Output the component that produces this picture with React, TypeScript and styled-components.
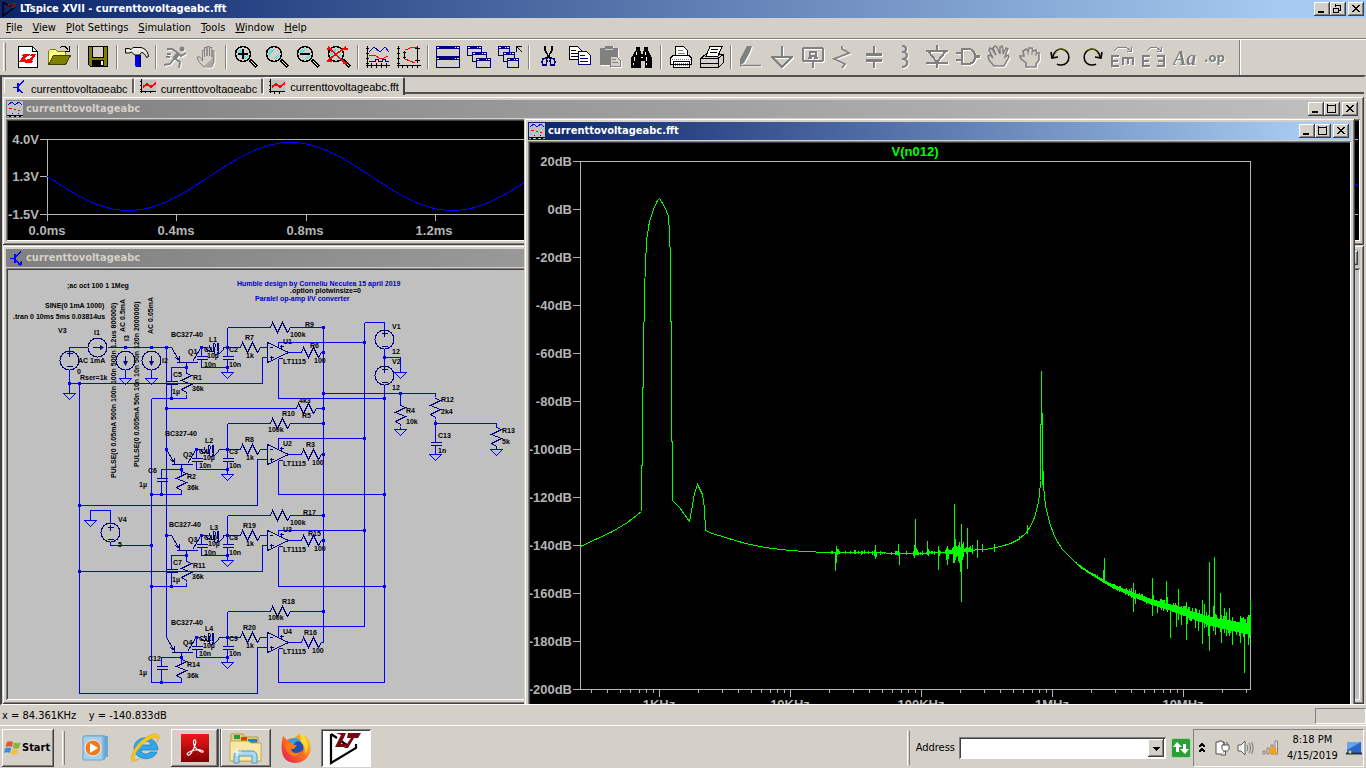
import React from "react";
import styled, { createGlobalStyle, css } from "styled-components";

const ui = `"DejaVu Sans Condensed", "DejaVu Sans", sans-serif`;
const arial = `"Liberation Sans", Arial, sans-serif`;
const face = "#d4d0c8";

const Global = createGlobalStyle`
  * { box-sizing: border-box; }
  html, body { margin: 0; padding: 0; background: ${face}; }
  body { font: 11px/14px ${ui}; color: #000; overflow: hidden; }
  button, select { font: inherit; color: inherit; margin: 0; padding: 0; border: 0; background: none; }
  svg { display: block; flex: none; }
`;

const raised = css`
  box-shadow: inset -1px -1px #404040, inset 1px 1px #fff, inset -2px -2px #808080;
`;
const sunken = css`
  box-shadow: inset 1px 1px #808080, inset -1px -1px #fff, inset 2px 2px #404040;
`;

const Screen = styled.div`
  display: flex;
  flex-direction: column;
  height: 100vh;
  min-height: 480px;
  background: ${face};
`;
const TitleBar = styled.header<{ $kind?: "app" | "active" | "inactive" }>`
  display: flex;
  align-items: center;
  flex: none;
  height: 18px;
  padding: 0 2px 0 1px;
  gap: ${(p) => (p.$kind === "app" ? 2 : 3)}px;
  color: ${(p) => (p.$kind === "inactive" ? face : "#fff")};
  background: ${(p) =>
    p.$kind === "inactive"
      ? "linear-gradient(90deg, #808080, #c0c0c0)"
      : "linear-gradient(90deg, #0a246a, #a6caf0 94%)"};
`;
const TitleText = styled.h1`
  flex: 1;
  margin: 0;
  font: bold 11px/16px ${ui};
  white-space: nowrap;
`;
const Buttons = styled.div`
  display: flex;
`;
const CaptionButton = styled.button`
  width: 16px;
  height: 14px;
  background: ${face};
  ${raised}
  &:last-child { margin-left: 2px; }
`;
const MenuBar = styled.nav`
  display: flex;
  align-items: center;
  flex: none;
  height: 20px;
  padding-left: 6px;
  gap: 10px;
`;
const MenuItem = styled.button`
  line-height: 16px;
  u { text-underline-offset: 1px; }
`;
const ToolBar = styled.div`
  display: flex;
  align-items: center;
  flex: none;
  height: 37px;
  border-top: 1px solid #808080;
  box-shadow: inset 0 1px #fff;
`;
const Grip = styled.span<{ $h: number }>`
  width: 3px;
  height: ${(p) => p.$h}px;
  flex: none;
  margin: 0 6px 0 3px;
  border-left: 1px solid #fff;
  border-right: 1px solid #808080;
`;
const ToolButton = styled.button`
  display: flex;
  justify-content: center;
  align-items: center;
  flex: none;
  width: 31px;
  height: 30px;
  &:disabled svg { filter: drop-shadow(1px 1px 0 #fff); }
`;
const Separator = styled.span<{ $tall?: boolean }>`
  flex: none;
  width: 2px;
  height: ${(p) => (p.$tall ? 35 : 24)}px;
  margin: 0 3px;
  margin-left: ${(p) => (p.$tall ? 8 : 3)}px;
  border-left: 1px solid #808080;
  border-right: 1px solid #fff;
`;
const Frame = styled.main`
  display: flex;
  flex-direction: column;
  flex: 1;
  min-height: 0;
  border: 2px solid #404040;
  border-top-color: #505050;
  border-right-color: ${face};
  border-bottom: 1px solid #fff;
`;
const Tabs = styled.div`
  display: flex;
  align-items: flex-end;
  flex: none;
  height: 19px;
  padding: 0 0 1px 2px;
`;
const Tab = styled.button<{ $active?: boolean }>`
  display: flex;
  align-items: ${(p) => (p.$active ? "center" : "flex-start")};
  gap: 5px;
  height: ${(p) => (p.$active ? 18 : 15)}px;
  padding: 0 4px 0 5px;
  margin-bottom: ${(p) => (p.$active ? 0 : 2)}px;
  overflow: hidden;
  font: 11px/20px ${arial};
  border-left: 1px solid #fff;
  border-top: 1px solid #fff;
  border-right: 2px solid ${(p) => (p.$active ? "#404040" : "#606060")};
  border-radius: 2px 2px 0 0;
`;
const TabRest = styled.span`
  flex: 1;
  height: 3px;
  border-top: 2px solid #505050;
`;
const Desktop = styled.div`
  position: relative;
  flex: 1;
  min-height: 0;
  overflow: hidden;
`;
const Win = styled.section`
  position: absolute;
  display: flex;
  flex-direction: column;
  padding: 4px;
  background: ${face};
  box-shadow: inset 1px 1px ${face}, inset -1px -1px #404040, inset 2px 2px #fff, inset -2px -2px #808080;
`;
const WaveWin = styled(Win)`
  top: 0;
  left: 0;
  right: 0;
  height: 149px;
`;
const SchematicWin = styled(Win)`
  top: 149px;
  left: 0;
  right: 0;
  bottom: 0;
`;
const FftWin = styled(Win)`
  top: 22px;
  left: 522px;
  right: 9px;
  height: 640px;
`;
const Client = styled.div<{ $bg: string }>`
  flex: 1;
  min-height: 0;
  margin-top: 1px;
  padding: 2px;
  overflow: hidden;
  background: ${(p) => p.$bg};
  ${sunken}
`;
const StatusBar = styled.footer`
  display: flex;
  align-items: center;
  justify-content: space-between;
  flex: none;
  height: 20px;
  padding: 2px 0 0 2px;
  white-space: pre;
`;
const StatusCell = styled.span`
  width: 51px;
  height: 16px;
  border: 1px solid #808080;
  border-right-color: #fff;
  border-bottom-color: #fff;
`;
const TaskBar = styled.footer`
  display: flex;
  align-items: center;
  flex: none;
  height: 43px;
  padding: 1px 2px 0;
  border-top: 1px solid #fff;
`;
const StartButton = styled.button`
  display: flex;
  align-items: center;
  gap: 1px;
  width: 52px;
  height: 38px;
  margin-right: 5px;
  padding-left: 2px;
  font: bold 11px/16px ${ui};
  ${raised}
`;
const Task = styled.button<{ $look?: "raised" | "stack" | "pressed" }>`
  display: flex;
  align-items: center;
  justify-content: center;
  flex: none;
  width: 50px;
  height: 38px;
  ${(p) => (p.$look === "raised" || p.$look === "stack") && raised}
  ${(p) => p.$look === "stack" && css`border-right: 3px double #606060;`}
  ${(p) => p.$look === "pressed" && css`${sunken} background: #fff;`}
`;
const Push = styled.span`
  flex: 1;
`;
const AddressLabel = styled.label`
  margin-right: 4px;
`;
const Combo = styled.div`
  position: relative;
  flex: none;
  width: 207px;
  height: 22px;
  background: #fff;
  ${sunken}
  select { width: 100%; height: 100%; appearance: none; outline: 0; }
`;
const ComboArrow = styled.span`
  position: absolute;
  top: 2px;
  right: 2px;
  width: 16px;
  height: 18px;
  background: ${face};
  pointer-events: none;
  ${raised}
`;
const GoButton = styled.button`
  margin: 0 2px 0 5px;
`;
const Tray = styled.div`
  display: flex;
  align-items: center;
  justify-content: space-between;
  flex: none;
  width: 171px;
  height: 38px;
  padding: 0 1px 0 4px;
  border: 1px solid #808080;
  border-right-color: #fff;
  border-bottom-color: #fff;
`;
const Clock = styled.time`
  width: 52px;
  text-align: center;
  line-height: 16px;
`;

/* ---------- small icon helpers ---------- */

type IconProps = { children: React.ReactNode; w?: number; h?: number; soft?: boolean };
const Icon = ({ children, w = 24, h = 24, soft }: IconProps) => (
  <svg width={w} height={h} viewBox={`0 0 ${w} ${h}`} fill="none" aria-hidden="true" shapeRendering={soft ? "auto" : "crispEdges"}>
    {children}
  </svg>
);
const G = "#808080";
const N = "#000080";

const Lens = ({ mark }: { mark?: React.ReactNode }) => (
  <>
    <path d="M16 15l7 7" stroke="#000" strokeWidth="4" />
    <path d="M17 16l5 5" stroke="#fff" strokeWidth="1" />
    <circle cx="9" cy="9" r="7.5" fill={face} stroke="#000" strokeWidth="1.6" />
    <path d="M4 7l3-3M4 10l5-6M9 14l5-5M11 14l3-3" stroke="#20e8f8" strokeWidth="1.4" />
    {mark}
  </>
);
const MiniWin = ({ x, y, w = 15, h = 10 }: { x: number; y: number; w?: number; h?: number }) => (
  <g>
    <rect x={x + 0.5} y={y + 0.5} width={w - 1} height={h - 1} fill={face} stroke={N} />
    <rect x={x} y={y} width={w} height={3} fill={N} />
    <path d={`M${x + 1} ${y + 1.5}h2M${x + w - 5} ${y + 1.5}h1M${x + w - 3} ${y + 1.5}h2`} stroke="#fff" />
  </g>
);

type Tool = { name: string; off?: boolean; soft?: boolean; art: React.ReactNode } | "sep";
const tools: Tool[] = [
  { name: "New schematic", art: <>
    <path d="M2.5 1.5h14l5 5v16h-19z" fill="#fff" stroke="#000" /><path d="M16.5 1.5v5h5" stroke="#000" />
    <path fillRule="evenodd" d="M3 17l4-6h-1l1-2h13l-4 7h2l-3 2H10l-2-1zM9 14h5l2-3h-5z" fill="#f00" /><path d="M10 15l5-6" stroke="#fff" />
  </> },
  { name: "Open", art: <>
    <path d="M1.500 18V6.500l2-2h5l2 2h8v4" fill="#ffff80" stroke="#808000" />
    <path d="M1.500 19.500l5-9h17l-5 9z" fill="#808000" stroke="#404000" /><path d="M13 3c3-3 6-2 8 2M22.500 1v5h-5" stroke="#000" />
  </> },
  "sep",
  { name: "Save", art: <>
    <path d="M2 1h20v21H4l-2-2z" fill="#000" /><path d="M3 2h3v11h12V2h3v19H4l-1-1z" fill="#808000" />
    <path d="M7 2h10v10H7z" fill={face} /><path d="M6 15h12v6H6z" fill="#000" /><path d="M15 16h2v4h-2z" fill="#fff" />
  </> },
  "sep",
  { name: "Control panel", soft: true, art: <>
    <path d="M10 10h5v12h-4c-1-1-1-2-1-3z" fill="#0000f0" /><path d="M14 10h2v12h-2z" fill="#000070" />
    <path d="M.5 3.500h3.500l2 1 2-2h8c4 1 7 4 7.500 9l-2 1c-1-3-3-5-5-5l-2 2.500h-5l-3-3-2 1H.5z" fill="#e8e4dc" stroke="#000" /><path d="M2 5.500h3M8 4h7l4 2" stroke="#fff" />
  </> },
  "sep",
  { name: "Run", off: true, soft: true, art: <>
    <circle cx="18" cy="4" r="2.500" fill={G} />
    <path d="M14 9l-4 5" stroke={G} strokeWidth="4" />
    <path d="M3 4h5l6 4 3 3 5-3M10 13l6 4-1 6M10 14l-4 5-6 1M3 9h4M2 12h4" stroke={G} strokeWidth="1.800" />
  </> },
  { name: "Halt", off: true, soft: true, art: <>
    <path d="M7.500 16V5.500h2V12V2.500h2.500V11V1.500h2.500V11V2.500h2.500V12V5.500h2V17l-2 5h-8L4 17l-2-5h3z" fill={face} stroke={G} />
    <path d="M9 21h8l2-4V9l-3 6z" fill={G} opacity=".5" />
  </> },
  "sep",
  { name: "Zoom area", art: <Lens mark={<path d="M4 9h10M9 4v10" stroke="#000" strokeWidth="2" />} /> },
  { name: "Pan", art: <Lens /> },
  { name: "Zoom back", art: <Lens mark={<path d="M4 9h10" stroke="#000" strokeWidth="2" />} /> },
  { name: "Zoom full extents", art: <><Lens /><path d="M1 2l18 17M19 2L1 15M0 4h5M0 16h5M17 4h4M16 18h4" stroke="#f00" strokeWidth="1.800" /></> },
  "sep",
  { name: "Autorange", art: <>
    <path d="M1.500 1v22M0 3.500h3M0 8.500h3M0 13.500h3M0 18.500h3M0 20.500h24M5.500 18v5M10.500 18v5M15.500 18v5M20.500 18v5" stroke="#000" />
    <path d="M3 7l5-5 6 5 5-5 4 5" stroke="#0000c0" /><path d="M3 10h6l4 3h5l4-2" stroke="#f00" /><path d="M3 16.500h6v-2h3v2h4v-2h3v2h4" stroke={N} />
  </> },
  { name: "Pick traces", art: <>
    <path d="M1.500 1v22M0 3.500h3M0 8.500h3M0 13.500h3M0 18.500h3M0 20.500h24M5.500 20v3M10.500 20v3M15.500 20v3M20.500 20v3" stroke="#000" />
    <path d="M8 5l8-3h4M8 14l10 4" stroke="#f00" /><path d="M7.500 6v8M6 7.500h3M6 12.500h3M20.500 1v17M18 3.500h5M18 15.500h5" stroke="#000" />
  </> },
  "sep",
  { name: "Tile windows", art: <><MiniWin x={0} y={1} w={24} h={11} /><MiniWin x={0} y={12} w={24} h={11} /></> },
  { name: "Cascade windows", art: <><MiniWin x={0} y={1} /><MiniWin x={5} y={7} /><MiniWin x={9} y={13} /></> },
  { name: "Close all windows", art: <><MiniWin x={0} y={1} w={12} /><MiniWin x={5} y={7} w={12} /><MiniWin x={9} y={13} w={12} /><path d="M18.500 7V1.500h5M19 2l5 5" stroke="#000" /></> },
  "sep",
  { name: "Cut", art: <>
    <path d="M8 1v4l5 9M15 1v4l-5 9" stroke="#000" strokeWidth="1.600" />
    <path d="M9 13l-3 1-1 3 1 3h3l1-4zM14 13l3 1 1 3-1 3h-3l-1-4z" stroke={N} strokeWidth="1.600" />
  </> },
  { name: "Copy", art: <>
    <path d="M1.500 1.500h8l4 4v9h-12z" fill="#fff" stroke="#000" /><path d="M3 5.500h5M3 8.500h8M3 11.500h8" stroke="#000" />
    <path d="M10.500 6.500h8l4 4v9h-12z" fill="#fff" stroke={N} /><path d="M12 10.500h5M12 13.500h8M12 16.500h8" stroke={N} />
  </> },
  { name: "Paste", off: true, art: <>
    <path d="M1 3h5V1h8v2h5v17H1z" fill={G} /><path d="M6 4.500h8" stroke={face} />
    <path d="M11.500 11.500h6l4 4v6h-10z" fill={face} stroke={G} /><path d="M13 14.500h4M13 17.500h6" stroke={G} />
  </> },
  { name: "Find", art: <>
    <path d="M6 2h4v3l2 5V10l2-5V2h4v3l4 8v10h-7v-7h-4v7H1V13l5-8z" fill="#000" /><path d="M6 7v3M4 12v4M3 18v2M15 7v3M16 12v4M16 18v2M11 12h2" stroke="#fff" />
  </> },
  "sep",
  { name: "Print", art: <>
    <path d="M6.500 10V1.500h8l4 4V10" fill="#fff" stroke="#000" /><path d="M9 5h5M9 8h7" stroke={G} />
    <path d="M1.500 19v-6l3-3h15l3 3v6zM4.500 16h16v6.500h-16z" fill="#fff" stroke="#000" /><path d="M3 14.500h19M6 18.500h13M6 20.500h13" stroke={G} strokeDasharray="1 1" />
  </> },
  { name: "Print setup", art: <>
    <path d="M.5 13.500l5-4h18v8l-5 5H.5z" fill={face} stroke="#000" />
    <path d="M6 11l4-9.500h12L18 11z" fill="#fff" stroke="#000" /><path d="M11 4.500h7M10 7.500h7" stroke="#000" />
    <path d="M1 13.500h17l5-4M18.500 14v8M1 18.500h17" stroke="#000" /><path d="M10 16.500h5" stroke="#ff0" />
  </> },
  "sep",
  { name: "Wire", off: true, soft: true, art: <><path d="M8 1h5l-2 6-6 11-4 2 0-6z" fill={G} /><path d="M1 20.500h21" stroke={G} strokeWidth="1.500" /></> },
  { name: "Ground", off: true, art: <path d="M12 1v11M1 12h22M2 12l10 10 10-10" stroke={G} strokeWidth="1.600" /> },
  { name: "Label net", off: true, art: <>
    <rect x="2" y="3" width="20" height="13" rx="2" stroke={G} strokeWidth="2" /><path d="M12 17v6" stroke={G} strokeWidth="2" />
    <path d="M9 13V7h6v6M9 10.500h6M7 13h4M13 13h4" stroke={G} strokeWidth="2" />
  </> },
  { name: "Resistor", off: true, soft: true, art: <path d="M10 1v3l7 4-15 6 11 5-3 4" stroke={G} strokeWidth="1.800" /> },
  { name: "Capacitor", off: true, art: <path d="M11 1v9M3 9.500h16M3 15.500h16M11 16v7" stroke={G} strokeWidth="2.500" /> },
  { name: "Inductor", off: true, soft: true, art: <path d="M8 1c5 0 6 6 0 6 6 0 7 7 0 7 7 0 7 8 0 8" stroke={G} strokeWidth="2.200" /> },
  { name: "Diode", off: true, art: <path d="M12 0v6M1 6h22M3 6l9 11 9-11M1 18h22M12 17v6" stroke={G} strokeWidth="2" /> },
  { name: "Component", off: true, art: <path d="M6 4h6c5 0 7 4 7 7.500s-2 7.500-7 7.500H6zM0 8h6M0 15h6M19 11.500h5" stroke={G} strokeWidth="2.200" /> },
  { name: "Move", off: true, soft: true, art: <>
    <path d="M7 21l-5-6-1-4 2-1 3 3-4-8 1-2 2 1 4 6-3-7 2-2 2 1 3 7 0-7 2-1 1 2 0 6 3-6 2 1-1 2-2 6 3-2 1 2-5 9z" fill={face} stroke={G} strokeWidth="1.500" />
  </> },
  { name: "Drag", off: true, soft: true, art: <>
    <path d="M8 22v-4l-5-4-1-3 4 0-1-5 3-2 2 2 1-3 3 0 1 3 3-1 1 3 2 0 0 7-3 4v3z" fill={face} stroke={G} strokeWidth="1.600" /><path d="M10 6v4M14 6v4M18 8v3" stroke={G} />
  </> },
  { name: "Undo", soft: true, art: <><path d="M4 12c0-4 4-8 8-8 11 1 10 16 0 16-2 0-3 0-4-1" stroke="#000" strokeWidth="1.500" /><path d="M6 9c1-3 4-5 7-5 2 0 4 1 5 2" stroke="#808000" /><path d="M2 7l1 6 6-1" stroke="#000" strokeWidth="1.600" /></> },
  { name: "Redo", soft: true, art: <><path d="M20 12c0-4-4-8-8-8-11 1-10 16 0 16 2 0 3 0 4-1" stroke="#000" strokeWidth="1.500" /><path d="M18 9c-1-3-4-5-7-5-2 0-4 1-5 2" stroke="#808000" /><path d="M22 7l-1 6-6-1" stroke="#000" strokeWidth="1.600" /></> },
  { name: "Rotate", off: true, art: <>
    <path d="M3 6l4-4h8l5 4M20 2v4h-4" stroke={G} /><path d="M0 11h8M1 11v11M0 16h7M0 21h8M11 13h12M12 13v7M17 13v6M22 13v7" stroke={G} strokeWidth="2" />
  </> },
  { name: "Mirror", off: true, art: <>
    <path d="M5 6l4-4h5l5 4M19 2v4h-4" stroke={G} /><path d="M0 11h8M1 11v11M0 16h7M0 21h8M15 11h8M22 11v11M16 16h7M15 21h8" stroke={G} strokeWidth="2" />
  </> },
  { name: "Text", off: true, soft: true, art: <text x="0" y="20" fill={G} fontFamily="Liberation Serif, serif" fontStyle="italic" fontWeight="bold" fontSize="20">Aa</text> },
  { name: "SPICE directive", off: true, soft: true, art: <text x="0" y="17" fill={G} fontFamily="DejaVu Sans Condensed, sans-serif" fontWeight="bold" fontSize="13">.op</text> },
];

/* ---------- window glyphs ---------- */

const Caption = ({ label, d, w = 1 }: { label: string; d: string; w?: number }) => (
  <CaptionButton aria-label={label}>
    <Icon w={16} h={14}><path d={d} stroke="#000" strokeWidth={w} /></Icon>
  </CaptionButton>
);
const WinButtons = ({ restore }: { restore?: boolean }) => (
  <Buttons>
    <Caption label="Minimize" d="M4 10h6" w={2} />
    {restore
      ? <Caption label="Restore" d="M5 3h6M5.500 2v3M10.500 3v5h-2M3 6h6M3.500 6v4.500h5V6" />
      : <Caption label="Maximize" d="M3 3h9M3.500 2v8.500h8V2" />}
    <Caption label="Close" d="M4 3l7 7M5 3l7 7M11 3l-7 7M12 3l-7 7" />
  </Buttons>
);
const WaveGlyph = () => (
  <Icon w={16} h={16}>
    <path d="M0 0h16v16H0z" fill="#c0c0c0" />
    <path d="M1 4l4-3 3 3 4-3 3 3" stroke="#00f" /><path d="M2 7.500h3M7 8.500h2M11 9.500h2" stroke="#f00" />
    <path d="M5 12.500h1M11 12.500h1" stroke="#00f" /><path d="M0 14.500h16" stroke="#000" /><path d="M2 15.500h2M7 15.500h2M12 15.500h2" stroke="#000" />
  </Icon>
);
const BjtGlyph = ({ tab }: { tab?: boolean }) => (
  <Icon w={16} h={16}>
    <path d="M3 8.500h4M9 6.500l5-5M9 10.500l5 5" stroke="#00f" />
    <path d="M8 4v9" stroke="#00f" strokeWidth="2" />
    {!tab && <path d="M10 15h5v-4z" fill="#00f" />}
  </Icon>
);
const PlotGlyph = () => (
  <Icon w={16} h={16}><path d="M2 1h14v11H2z" fill="#c0c0c0" /><path d="M1.500 0v14M0 2.500h2M0 6.500h2M0 10.500h2M0 12.500h16M5.500 12v3M10.500 12v3" stroke="#000" /><path d="M3 8l4-3 4 3 5-4" stroke="#f00" strokeWidth="2" /></Icon>
);

/* ---------- transient plot ---------- */

const sine = Array.from({ length: 1312 }, (_, i) => {
  const y = 176.5 + 34 * Math.sin((2 * Math.PI * i) / 324);
  return `${i ? "L" : "M"}${47.5 + i} ${y.toFixed(1)}`;
}).join("");

const TransientPlot = () => (
  <svg width="1400" height="119" viewBox="8 121 1400 119" fill="none" role="img" aria-label="Transient waveform">
    <g stroke="#b4b4b4" shapeRendering="crispEdges">
      <path d="M40 139.500H1358M40 214.500H1358M40 176.500h8M47.500 139v82" />
      {[176, 306, 435, 565, 695].map((x) => <path key={x} d={`M${x + 0.5} 214v7`} />)}
    </g>
    <path d={sine} stroke="#00f" strokeWidth="1" shapeRendering="crispEdges" />
    <g fill="#b4b4b4" fontFamily={arial} fontWeight="bold" fontSize="13">
      {[["4.0V", 144], ["1.3V", 181], ["-1.5V", 219]].map(([t, y]) => <text key={t} x="39" y={y} textAnchor="end">{t}</text>)}
      {["0.0ms", "0.4ms", "0.8ms", "1.2ms"].map((t, i) => <text key={t} x={47 + i * 129} y="235" textAnchor="middle">{t}</text>)}
    </g>
  </svg>
);

/* ---------- FFT plot ---------- */

const curve: [number, number][] = [
  [580, 546], [595, 539], [612, 531], [627, 522], [641, 511], [642, 420], [644, 290], [646, 240], [649, 221], [653, 209],
  [657, 200], [659, 198], [664, 206], [668, 216], [669, 232], [670, 260], [671, 380], [672, 500], [679, 507], [689, 521], [691, 510], [694, 493],
  [697, 484], [702, 494], [704, 508], [705, 530], [712, 533], [725, 537], [745, 543], [765, 547], [780, 549], [790, 550], [805, 551],
  [825, 552], [860, 552], [910, 553], [945, 552], [965, 550], [985, 549], [1000, 546], [1010, 543], [1018, 539],
  [1025, 533], [1030, 526], [1034, 517], [1037, 506], [1039, 495], [1040, 480], [1041, 371], [1042, 454], [1043, 486],
  [1045, 505], [1047, 514], [1050, 525], [1055, 538], [1062, 549], [1070, 557], [1077, 564], [1087, 571], [1097, 577],
  [1107, 583], [1120, 589], [1135, 595], [1150, 601], [1170, 607], [1190, 614], [1210, 621], [1230, 625], [1250, 629],
];
const spikes: [number, number, number][] = [
  [835, 553, 571], [836, 546, 563], [837, 549, 555], [838, 549, 554], [875, 545, 559], [876, 552, 557], [874, 550, 556], [898, 544, 556], [899, 552, 565], [897, 551, 555],
  [915, 519, 555], [914, 545, 558], [913, 551, 556], [916, 548, 555], [917, 550, 555], [927, 541, 553], [928, 549, 556], [938, 546, 570], [939, 550, 556], [946, 548, 560], [947, 546, 565],
  [948, 550, 559], [953, 547, 563], [954, 504, 563], [955, 539, 560], [956, 546, 557], [958, 545, 561], [959, 547, 563], [960, 547, 572],
  [961, 524, 602], [962, 544, 560], [963, 546, 557], [967, 528, 569], [966, 547, 554], [972, 545, 554], [977, 540, 558], [982, 544, 552], [994, 544, 552],
  [1027, 525, 534], [1019, 536, 540], [1042, 454, 485], [1103, 570, 581], [1104, 558, 582], [1131, 588, 598], [1133, 583, 612], [1135, 590, 604], [1137, 594, 598],
  [1152, 578, 616], [1153, 595, 605], [1157, 602, 613], [1163, 600, 611], [1166, 581, 606], [1167, 597, 612], [1170, 606, 638], [1176, 605, 627], [1178, 589, 620], [1181, 606, 625], [1186, 602, 640],
  [1187, 609, 624], [1195, 608, 628], [1198, 615, 631], [1202, 600, 644], [1204, 604, 628], [1208, 615, 636], [1209, 562, 651], [1213, 606, 631], [1214, 557, 625], [1215, 616, 635], [1220, 593, 632],
  [1221, 617, 643], [1224, 608, 633], [1226, 612, 636], [1229, 608, 636], [1230, 620, 633], [1232, 621, 645], [1240, 616, 643], [1243, 617, 632],
  [1244, 619, 673], [1247, 617, 634], [1248, 615, 645], [1249, 615, 632], [1250, 600, 632],
];
const floorAt = (x: number) => {
  const i = Math.max(1, curve.findIndex(([cx]) => cx >= x));
  const [x0, y0] = curve[i - 1];
  const [x1, y1] = curve[i];
  return y0 + ((y1 - y0) * (x - x0)) / (x1 - x0);
};
const hash = (n: number) => {
  const s = Math.sin(n * 91.7) * 4375.85;
  return s - Math.floor(s);
};
const noise: string[] = [];
for (let x = 830; x <= 1250; x++) {
  const base = floorAt(x);
  let amp = 0;
  if (x < 948) amp = hash(x + 7) > 0.75 ? 1 : 0;
  else if (x < 957 || (x > 963 && x < 972)) amp = 1 + hash(x);
  else if (x < 972) amp = 3 + hash(x) * 2;
  else if (x > 1065) amp = ((x - 1065) / 185) * 5.5;
  if (!amp) continue;
  const up = amp * (0.8 + (hash(x * 3) > 0.75 ? 0.9 : 0.1));
  const down = amp * (0.8 + (hash(x * 5) > 0.8 ? 0.7 : 0.1));
  noise.push(`M${x + 0.5} ${Math.round(base - up)}V${Math.round(base + down + 1)}`);
}
const minor: number[] = [];
[528, 659, 790, 921, 1052, 1183].forEach((d) => {
  for (let k = 2; k < 10; k++) {
    const x = Math.round(d + 131 * Math.log10(k));
    if (x > 581 && x < 1250) minor.push(x);
  }
});

const FftPlot = () => (
  <svg width="1300" height="600" viewBox="530 143 1300 600" fill="none" role="img" aria-label="FFT of V(n012)">
    <g stroke="#b4b4b4" shapeRendering="crispEdges">
      <path d="M573 161.500H1251M573 689.500H1251M580.500 161v529M1250.500 161v529" />
      {Array.from({ length: 10 }, (_, i) => <path key={i} d={`M573 ${209.5 + 48 * i}h7`} />)}
      {minor.map((x) => <path key={x} d={`M${x + 0.5} 690v3`} />)}
      {[659, 790, 921, 1052, 1183].map((x) => <path key={x} d={`M${x + 0.5} 690v7`} />)}
    </g>
    <g stroke="#0f0" shapeRendering="crispEdges">
      <path d={"M" + curve.map(([x, y]) => `${x + 0.5} ${y + 0.5}`).join("L")} />
      <path d={noise.join("")} />
      <path d={spikes.map(([x, a, b]) => `M${x + 0.5} ${a}V${b}`).join("")} />
    </g>
    <g fontFamily={arial} fontWeight="bold" fontSize="13">
      <text x="915" y="156" textAnchor="middle" fill="#0f0">V(n012)</text>
      <g fill="#b4b4b4">
        {Array.from({ length: 12 }, (_, i) => <text key={i} x="572" y={166 + 48 * i} textAnchor="end">{20 - 20 * i}dB</text>)}
        {["1KHz", "10KHz", "100KHz", "1MHz", "10MHz"].map((t, i) => <text key={t} x={659 + 131 * i} y="709" textAnchor="middle">{t}</text>)}
      </g>
    </g>
  </svg>
);

/* ---------- schematic ---------- */

const zigH = (x: number, y: number) => `M${x} ${y}l2-5 5 10 5-10 5 10 3-5h1`;
const zigV = (x: number, y: number) => `M${x} ${y}l5 2-10 5 10 4-10 5 5 3v1`;
const capV = (x: number, y: number) => `M${x - 5} ${y}h11M${x - 5} ${y + 3}h11`;
const gnd = (x: number, y: number) => `M${x - 6} ${y}h12l-6 6z`;

const stage = (Y: number, b: boolean) => {
  const s = b ? -5 : 0;
  const fb = b ? 26 : 20;
  const low = b ? 45 : 51;
  const top = b ? 11 : 5;
  const cx = b ? 161 : 171;
  const c = 201 + s;
  const plates = b ? Y + 29 : Y + 34;
  const inX = b ? 257 : 262;
  const inY = b ? Y + 56 : Y + 36;
  const q = 186 + s;
  const wires = [
    `M166 ${Y}H${171 + s}`, `M${q} ${Y + 20}H${cx}V${plates}M${cx} ${plates + 3}V${Y + low}`,
    `M${q} ${Y + 20}V${Y + 25}M${q} ${Y + low - 4}V${Y + low}M151 ${Y + low}H${q}`,
    `M${c} ${Y}V${Y + 9}M${c} ${Y + 12}V${Y + 20}H227M227 ${Y - fb}V${Y + 9}M227 ${Y + 12}V${Y + 25}`,
    `M227 ${Y - fb}H270M291 ${Y - fb}H323M222 ${Y}H240M261 ${Y}H267M267 ${Y + 10}H${inX}V${inY}H79`,
    `M278 ${Y - 1}V${Y - top}H364M278 ${Y + 11}V${Y + low}H384M288 ${Y + 5}H301M321 ${Y + 5}H323`, gnd(227, Y + 25),
  ].join("");
  const parts = [
    `M${171 + s} ${Y}l9 15M${176 + s} ${Y + 15}h21M${192 + s} ${Y + 14}l8-13M${q} ${Y + 15}v5M${175 + s} ${Y + 10}l4 3v-5`,
    capV(cx, plates), capV(c, Y + 9), capV(227, Y + 9), zigV(q, Y + (b ? 22 : 26)),
    `M${c} ${Y}h4c3 5 6 5 4-1s3 11 5 3-2-9-1-1 4 9 5 1-2-9-1-1 2 5 5 2l2-3h4`,
    zigH(270, Y - fb), zigH(240, Y), zigH(301, Y + 5),
    `M267 ${Y - 5}v20l21-10zM269 ${Y}h3M269 ${Y + 10}h4M271 ${Y + 8}v4M279 ${Y - 1}h4M281 ${Y - 3}v4M278 ${Y + 11}h4`,
  ].join("");
  const dots: [number, number][] = [
    [q, Y + 20], [cx, Y + low], [c, Y], [227, Y], [227, Y + 20], [323, Y - fb],
  ];
  return { wires, parts, dots };
};
const stages = [stage(347, false), stage(449, true), stage(535, false), stage(637, true)];

const wires = `M323 327V642M364 322V626M384 322V329M364 322H384M384 349V365M384 357H400V372M384 385V682
M323 393H435V396M400 393V404M400 426V429M435 419V442M435 445V454M435 423H496V427M496 447V449
M166 408H296M317 408H323M166 347V637M79 383V693M151 398V682M110 542V545H151M110 522V510H90V520
M69 350V347H87M107 347H166M69 370V393M125 370V378M151 370V378M69 383H262
${gnd(400, 372)}${gnd(400, 429)}${gnd(435, 454)}${gnd(496, 449)}${gnd(90, 520)}${gnd(69, 393)}${gnd(125, 378)}${gnd(151, 378)}`;
const parts = `${zigH(296, 408)}${zigV(400, 405)}${zigV(435, 398)}${zigV(496, 427)}${capV(435, 442)}
M92 347h8M125 355v9M151 355v9M66 353h6M69 350v6M66 366h6M381 333h6M384 330v6M381 346h6M381 369h6M384 366v6M381 382h6M107 527h6M110 524v6M107 539h6`;
const dots: [number, number][] = [
  [125, 347], [151, 347], [166, 347], [69, 383], [79, 383], [166, 408], [323, 408], [323, 393], [400, 393], [435, 423], [384, 357],
  [384, 398], [364, 342], [323, 352], [166, 449], [323, 454], [364, 438], [384, 494], [79, 505], [151, 494], [151, 545], [166, 535],
  [79, 571], [151, 586], [323, 540], [364, 530], [384, 586],
];
const circles: [number, number][] = [[69, 360], [97, 347], [125, 360], [151, 360], [384, 339], [384, 375], [110, 532]];

const labels: [number, number, string][] = [
  [67, 288, ";ac oct 100 1 1Meg"], [45, 308, "SINE(0 1mA 1000)"], [13, 319, ".tran 0 10ms 5ms 0.03814us"],
  [58, 333, "V3"], [94, 335, "I1"], [78, 363, "AC 1mA"], [77, 374, "0"], [80, 380, "Rser=1k"], [162, 363, "I2"], [290, 293, ".option plotwinsize=0"],
  [171, 337, "BC327-40"], [209, 342, "L1"], [188, 354, "Q1"], [204, 352, "C1"], [207, 358, "10µ"], [204, 367, "10n"], [229, 352, "C2"], [229, 367, "10n"],
  [173, 377, "C5"], [172, 394, "1µ"], [193, 380, "R1"], [192, 391, "36k"], [245, 340, "R7"], [246, 358, "1k"],
  [305, 327, "R9"], [290, 337, "100k"], [283, 344, "U1"], [310, 348, "R6"], [314, 363, "100"], [283, 364, "LT1115"],
  [392, 329, "V1"], [392, 354, "12"], [392, 364, "V2"], [392, 390, "12"], [299, 403, "4k3"], [302, 418, "R5"], [282, 416, "R10"], [268, 432, "100k"],
  [283, 446, "U2"], [306, 447, "R3"], [283, 466, "LT1115"], [312, 465, "100"], [406, 413, "R4"], [406, 424, "10k"], [441, 402, "R12"], [441, 414, "2k4"],
  [438, 438, "C13"], [438, 453, "1n"], [502, 433, "R13"], [502, 444, "5k"],
  [165, 436, "BC327-40"], [205, 443, "L2"], [183, 457, "Q2"], [199, 454, "C4"], [203, 460, "10µ"], [199, 468, "10n"], [229, 454, "C3"], [229, 468, "10n"],
  [245, 442, "R8"], [246, 460, "1k"], [148, 473, "C6"], [139, 487, "1µ"], [187, 479, "R2"], [187, 490, "36k"],
  [169, 527, "BC327-40"], [210, 530, "L3"], [188, 542, "Q3"], [204, 540, "C10"], [208, 546, "10µ"], [204, 555, "10n"], [229, 540, "C8"], [229, 555, "10n"],
  [243, 528, "R19"], [246, 546, "1k"], [173, 565, "C7"], [172, 582, "1µ"], [193, 568, "R11"], [192, 579, "36k"], [303, 515, "R17"], [290, 525, "100k"],
  [283, 532, "U3"], [308, 536, "R15"], [283, 552, "LT1115"], [314, 551, "100"], [118, 522, "V4"], [118, 547, "5"],
  [171, 625, "BC327-40"], [205, 631, "L4"], [183, 645, "Q4"], [199, 641, "C11"], [203, 648, "10µ"], [199, 656, "10n"], [229, 641, "C9"], [229, 656, "10n"],
  [243, 630, "R20"], [246, 648, "1k"], [148, 661, "C12"], [139, 675, "1µ"], [187, 667, "R14"], [187, 678, "36k"], [282, 604, "R18"], [268, 620, "100k"],
  [283, 634, "U4"], [304, 635, "R16"], [283, 654, "LT1115"], [312, 653, "100"],
];
const upright: [number, number, string][] = [
  [116, 478, "PULSE(0 0.05mA 500n 100n 100n 500n 1.2us 800000)"], [139, 467, "PULSE(0 0.005mA 50n 10n 10n 50n 120n 2000000)"],
  [125, 332, "AC 0.5mA"], [129, 341, "I3"], [153, 334, "AC 0.05mA"],
];

const Schematic = () => (
  <svg width="1350" height="428" viewBox="8 270 1350 428" fill="none" role="img" aria-label="Schematic">
    <g transform="translate(.5 .5)" shapeRendering="crispEdges">
      <g stroke="#000080">
        <path d={parts + stages.map((s) => s.parts).join("")} />
        {circles.map(([x, y]) => <circle key={`${x},${y}`} cx={x} cy={y} r="9.500" />)}
      </g>
      <path d={wires + stages.map((s) => s.wires).join("")} stroke="#00f" />
    </g>
    <path d="M100 345l4 2.500-4 2.500zM123 361h5l-2.500 5zM149 361h5l-2.500 5z" fill="#000080" />
    <g fill="#00f" shapeRendering="crispEdges">
      {[...dots, ...stages.flatMap((s) => s.dots)].map(([x, y]) => <rect key={`${x},${y}`} x={x - 1} y={y - 1} width="3" height="3" />)}
    </g>
    <g fontFamily={arial} fontWeight="bold" fontSize="7" fill="#000">
      {labels.map(([x, y, t]) => <text key={`${x},${y}`} x={x} y={y}>{t}</text>)}
      {upright.map(([x, y, t]) => <text key={t} transform={`translate(${x} ${y}) rotate(-90)`}>{t}</text>)}
      <g fill="#0000c8">
        <text x="237" y="286">Humble design by Corneliu Neculea 15 april 2019</text>
        <text x="255" y="301">Paralel op-amp I/V converter</text>
      </g>
    </g>
  </svg>
);

/* ---------- taskbar art ---------- */

const WindowsFlag = () => (
  <Icon w={17} h={16} soft>
    <path d="M3 2c2-1 4-1 6 0L8 7C6 6 4 6 1.500 7z" fill="#e8502c" /><path d="M10 2.500c2 1 4 1 6.500 0L15 8c-2 1-4 1-6 0z" fill="#7cb83c" />
    <path d="M1.200 8.200c2-1 4-1 6 0L6 13c-2-1-4-1-6 0z" fill="#3c8cdc" /><path d="M8.500 9c2 1 4 1 6 0L13 14c-2 1-4 1-6 0z" fill="#f8c030" />
  </Icon>
);
const MediaPlayer = () => (
  <Icon w={28} h={28} soft>
    <path d="M7 2h19v21H7z" fill="#6ca8d4" /><path d="M4 2h19v23H4z" fill="#8cc4e8" stroke="#5898c8" /><path d="M1 2h20v24H1z" fill="#a4d0ec" stroke="#68a4cc" />
    <circle cx="11" cy="14" r="8" fill="#f47a20" stroke="#fff" strokeWidth=".8" /><path d="M8 9l8 5-8 5z" fill="#fff" />
  </Icon>
);
const Explorer = () => (
  <Icon w={32} h={32} soft>
    <path d="M28 18H11c1 5 7 5 9 2h7c-3 9-22 10-23-4C4 3 27 1 28 18zM11 13h10c-1-5-9-5-10 0z" fill="#2ea8e8" stroke="#1878c0" strokeWidth=".7" fillRule="evenodd" />
    <path d="M2 29C-2 22 12 4 24 2c6-1 6 3 3 8 1-4 0-5-4-4C14 9 4 21 4 26c0 2 2 2 5 1-3 2-6 3-7 2z" fill="#f8c820" stroke="#d09010" strokeWidth=".4" />
  </Icon>
);
const Acrobat = () => (
  <Icon w={30} h={30} soft>
    <defs><linearGradient id="ac" x2="0" y2="1"><stop stopColor="#f01818" /><stop offset="1" stopColor="#800004" /></linearGradient></defs>
    <path d="M1 1h28v28H1z" fill="url(#ac)" />
    <path d="M8 22c-3-1 2-4 7-5s9 1 8 2-6-2-8-5-2-8 0-7 0 6-2 10-4 6-5 5z" stroke="#fff" strokeWidth="1.200" />
  </Icon>
);
const Folders = () => (
  <Icon w={36} h={34} soft>
    <path d="M3 3h12l2 3h13v24H3z" fill="#e8cc78" stroke="#b89840" /><path d="M6 4h6v4H6z" fill="#20a040" /><path d="M13 6h6v4h-6z" fill="#d04020" /><path d="M20 8h9v4h-9z" fill="#2080d0" />
    <path d="M2 10h18l3 2h10v18H2z" fill="#f8e8a8" stroke="#c8a850" />
    <path d="M6 32V25c0-3 2-5 5-5h13c3 0 5 2 5 5v7h-5v-7H11v7z" fill="#a8d8f0" stroke="#5898c0" /><path d="M9 17v8M5 21h8" stroke="#fff" strokeWidth="1.200" />
  </Icon>
);
const Firefox = () => (
  <Icon w={32} h={32} soft>
    <defs><linearGradient id="fx" x1="1" x2="0" y2="1"><stop stopColor="#ffe030" /><stop offset=".5" stopColor="#ff7020" /><stop offset="1" stopColor="#e01060" /></linearGradient></defs>
    <path d="M3 4l4 4c3-2 5-2 7-2 2-1 4-3 5-5 1 3 3 4 5 6l1-4c5 5 7 13 5 18-6 14-26 13-28-1C1 14 2 8 3 4z" fill="url(#fx)" />
    <circle cx="15.500" cy="16" r="8" fill="#2050b0" /><path d="M8 9c4-4 10-4 14 1-5-2-7 0-8 3z" fill="#38a0e0" />
    <path d="M5 13c3-4 7-3 9 0l3 0-3 4-3 0c0 4 7 6 12 1-3 9-16 9-18-5z" fill="#ff7818" />
    <path d="M21 2c6 5 10 12 4 20 1-6-1-9-4-12-1-3-1-5 0-8z" fill="#ffd830" />
  </Icon>
);
const LtLogo = () => (
  <Icon w={34} h={34} soft>
    <path d="M2 3v29L27 17v-4M2 3l6 4M12 10l7 5" stroke="#000" strokeWidth="2.200" />
    <path d="M14 2H7l5 2-6 12h10l3-4h-1l-2 1h-4l5-11zM19 2h13l-3 5h-4l-6 10h-4l7-10h-4z" fill="#780810" />
  </Icon>
);
const AppGlyph = () => (
  <Icon w={17} h={16} soft><path d="M2 1v14l12-9M2 1l8 5" stroke="#000" strokeWidth="1.500" /><path fillRule="evenodd" d="M5 7l3-5h8l-3 5zM8 6h3l2-3h-3z" fill="#900010" /></Icon>
);

const menus = [["F", "ile"], ["V", "iew"], ["P", "lot Settings"], ["S", "imulation"], ["T", "ools"], ["W", "indow"], ["H", "elp"]];

export default function App() {
  return (
    <Screen>
      <Global />
      <TitleBar $kind="app">
        <AppGlyph />
        <TitleText>LTspice XVII - currenttovoltageabc.fft</TitleText>
        <WinButtons restore />
      </TitleBar>
      <MenuBar>
        {menus.map(([k, rest]) => <MenuItem key={k}><u>{k}</u>{rest}</MenuItem>)}
      </MenuBar>
      <ToolBar>
        <Grip $h={28} />
        {tools.map((t, i) =>
          t === "sep" ? <Separator key={i} /> : (
            <ToolButton key={i} aria-label={t.name} disabled={t.off}><Icon soft={t.soft}>{t.art}</Icon></ToolButton>
          ))}
        <Separator $tall />
      </ToolBar>
      <Frame>
        <Tabs>
          <Tab><BjtGlyph tab /><span>currenttovoltageabc</span></Tab>
          <Tab><PlotGlyph /><span>currenttovoltageabc</span></Tab>
          <Tab $active><PlotGlyph /><span>currenttovoltageabc.fft</span></Tab>
          <TabRest />
        </Tabs>
        <Desktop>
          <WaveWin>
            <TitleBar $kind="inactive"><WaveGlyph /><TitleText as="h2">currenttovoltageabc</TitleText><WinButtons /></TitleBar>
            <Client $bg="#000"><TransientPlot /></Client>
          </WaveWin>
          <SchematicWin>
            <TitleBar $kind="inactive"><BjtGlyph /><TitleText as="h2">currenttovoltageabc</TitleText><WinButtons /></TitleBar>
            <Client $bg="#c0c0c0"><Schematic /></Client>
          </SchematicWin>
          <FftWin>
            <TitleBar $kind="active"><WaveGlyph /><TitleText as="h2">currenttovoltageabc.fft</TitleText><WinButtons /></TitleBar>
            <Client $bg="#000"><FftPlot /></Client>
          </FftWin>
        </Desktop>
      </Frame>
      <StatusBar>
        <span>x = 84.361KHz    y = -140.833dB</span>
        <StatusCell />
      </StatusBar>
      <TaskBar>
        <StartButton><WindowsFlag />Start</StartButton>
        <Grip $h={34} />
        <Task aria-label="Media player"><MediaPlayer /></Task>
        <Task aria-label="Internet Explorer"><Explorer /></Task>
        <Task aria-label="Acrobat Reader" $look="stack"><Acrobat /></Task>
        <Task aria-label="File Explorer" $look="raised"><Folders /></Task>
        <Task aria-label="Firefox"><Firefox /></Task>
        <Task aria-label="LTspice" $look="pressed"><LtLogo /></Task>
        <Push />
        <Grip $h={34} />
        <AddressLabel htmlFor="address">Address</AddressLabel>
        <Combo>
          <select id="address"><option /></select>
          <ComboArrow><Icon w={16} h={18}><path d="M4 8h8l-4 4z" fill="#000" /></Icon></ComboArrow>
        </Combo>
        <GoButton aria-label="Go">
          <Icon w={20} h={20} soft><rect x=".5" y=".5" width="19" height="19" rx="2" fill="#2ca038" stroke="#a0d8a0" /><path d="M6 4L2 9h3v5h3V9h3zM14 16l4-5h-3V6h-3v5H9z" fill="#fff" /></Icon>
        </GoButton>
        <Tray>
          <Icon w={8} h={10}><path d="M1 4l3-3 3 3M1 9l3-3 3 3" stroke="#000" strokeWidth="1.500" /></Icon>
          <Icon w={16} h={17} soft><path d="M5 2h3v1h2v12H2V3h3z" fill="#fff" stroke="#505050" /><path d="M8 6h7v3c0 3-2 3-3.500 3S8 12 8 9zM10 6V3M13 6V3M11.500 12v4H7" fill="#fff" stroke="#505050" /></Icon>
          <Icon w={17} h={16} soft><path d="M1 5h3l4-4v14l-4-4H1z" fill="#f4f4f4" stroke="#606060" /><path d="M10 5c1 2 1 4 0 6M12 3c2 3 2 7 0 10M14.500 2c2 4 2 8 0 12" stroke="#707070" /></Icon>
          <Icon w={17} h={16} soft><path d="M1 11h2v3H1zM5 8h2v6H5zM9 5h2v9H9zM13 1h2.500v13H13z" fill="#e8e8e8" stroke="#808080" /><path d="M11 6l1 3 3-1-1 3 2 2-3 0-1 3-2-3-3 1 1-3-2-2 3-1z" fill="#f8a010" /></Icon>
          <Clock>8:18 PM<br />4/15/2019</Clock>
          <Icon w={16} h={14} soft><path d="M1 1h14v11H1z" fill="#2868c8" /><path d="M1 1h14L1 9z" fill="#68a4e8" /><path d="M0 12.500h16" stroke="#203050" strokeWidth="2" /><circle cx="4" cy="11" r="1.500" fill="#f0d040" /></Icon>
        </Tray>
      </TaskBar>
    </Screen>
  );
}
